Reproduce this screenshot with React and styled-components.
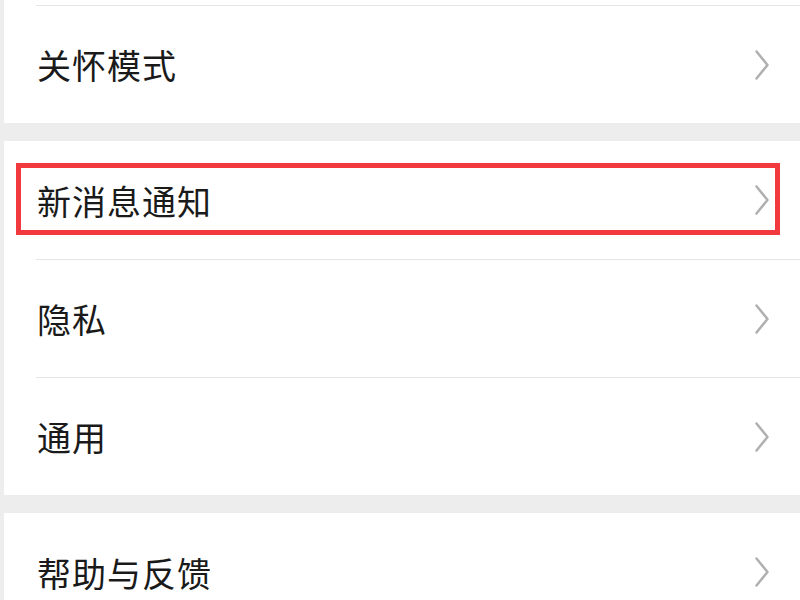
import React from 'react'
import styled, { createGlobalStyle } from 'styled-components'

const GlobalStyle = createGlobalStyle`
  html, body {
    margin: 0;
    padding: 0;
    background: #ededed;
    overflow: hidden;
  }
  body {
    font-family: "Noto Sans CJK SC", "Noto Sans", sans-serif;
  }
`;

const sections = [
    {lead: true, items: [{label: '关怀模式'}]},
    {items: [{label: '新消息通知', marked: true}, {label: '隐私'}, {label: '通用'}]},
    {items: [{label: '帮助与反馈'}]},
];

function Chevron() {
    return (
        <svg width="14" height="30" viewBox="0 0 14 30">
            <polyline points="1.5,1.5 12.5,15 1.5,28.5" fill="none" stroke="#b0b0b0" strokeWidth="2.5"
                      strokeLinecap="round" strokeLinejoin="round"/>
        </svg>
    )
}

export default function App() {
    return (
        <Page>
            <GlobalStyle/>
            {sections.map((section, i) => (
                <Section key={i}>
                    {section.lead && <LeadSpacer/>}
                    {section.items.map((item, j) => (
                        <Row key={item.label} divided={section.lead || j > 0}>
                            <Label>{item.label}</Label>
                            <Chevron/>
                            {item.marked && <Mark/>}
                        </Row>
                    ))}
                </Section>
            ))}
        </Page>
    )
}

const Page = styled.div`
  width: 800px;
  height: 600px;
  padding-left: 4px;
  box-sizing: border-box;
  display: flex;
  flex-direction: column;
  gap: 18px;
  background: #ededed;
`;

const Section = styled.div`
  background: #fff;
  display: flex;
  flex-direction: column;
  flex-shrink: 0;
`;

const LeadSpacer = styled.div`
  height: 5px;
`;

const Row = styled.div`
  position: relative;
  height: 118px;
  margin-left: 32px;
  padding-right: 31px;
  box-sizing: border-box;
  display: flex;
  align-items: center;
  justify-content: space-between;
  border-top: ${props => props.divided ? '1px solid #e6e6e6' : 'none'};
`;

const Label = styled.div`
  font-size: 34px;
  color: #1a1a1a;
  padding-left: 1px;
  letter-spacing: 1px;
`;

const Mark = styled.div`
  position: absolute;
  left: -20px;
  right: 20px;
  top: 22px;
  height: 72px;
  box-sizing: border-box;
  border: 5px solid #f23a3e;
  pointer-events: none;
`;
